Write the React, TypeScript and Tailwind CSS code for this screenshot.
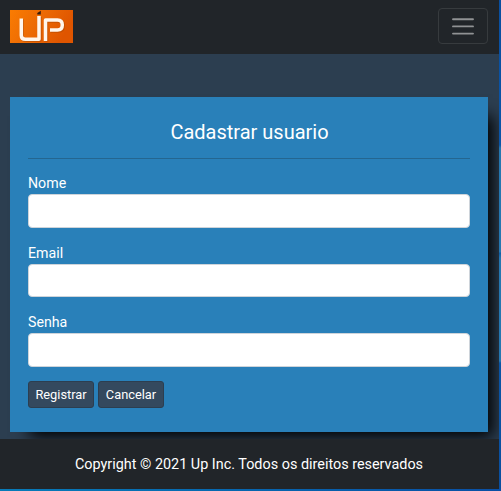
const fields = [
  { id: "nome", label: "Nome", type: "text", box: "mb-[14px] h-[34px]" },
  { id: "email", label: "Email", type: "email", box: "mb-[14px] h-[33px]" },
  { id: "senha", label: "Senha", type: "password", box: "mb-[14px] h-[34px]" },
];

function Logo() {
  return (
    <svg width="63" height="33" viewBox="0 0 63 33" aria-label="UP">
      <defs>
        <linearGradient id="orange" x1="0" y1="0" x2="1" y2="0.3">
          <stop offset="0" stopColor="#fa7c02" />
          <stop offset="0.5" stopColor="#ec6a04" />
          <stop offset="1" stopColor="#df5500" />
        </linearGradient>
      </defs>
      <rect width="63" height="33" fill="url(#orange)" />
      <g fill="none" strokeLinecap="butt" strokeLinejoin="round">
        <g stroke="#a94500" strokeOpacity="0.5" strokeWidth="4" transform="translate(0.7 0.8)">
          <path d="M11.3 8.5V25.5Q11.3 29.3 15.5 29.3H29V6" />
          <path d="M35.5 31V10H47.5Q52.3 10 52.3 15Q52.3 20 47.5 20H40" />
        </g>
        <g stroke="#fff6ec" strokeWidth="3.5">
          <path d="M11.3 8.5V25.5Q11.3 29.3 15.5 29.3H29V6" />
          <path d="M35.5 31V10H47.5Q52.3 10 52.3 15Q52.3 20 47.5 20H40" />
        </g>
      </g>
      <path d="M27.3 4.6V3L30.8 0.8V4.6Z" fill="#321c10" />
    </svg>
  );
}

export default function App() {
  return (
    <div className="flex h-[491px] w-[501px] flex-col overflow-hidden font-['Roboto',sans-serif] text-[14.4px] text-white">
      <div className="flex h-[489px]">
        <div className="flex w-[499px] shrink-0 flex-col overflow-hidden bg-[#2c3e50]">
          <header className="flex h-[54px] shrink-0 items-start justify-between bg-[#212529] pl-[10px] pr-[11px]">
            <div className="pt-[10px]">
              <Logo />
            </div>
            <button
              aria-label="Menu"
              className="mt-2 flex h-9 w-[50px] items-center justify-center rounded-[4px] border border-[#373b3e]"
            >
              <svg width="22" height="18" viewBox="0 0 22 18" stroke="#909294" strokeWidth="1.9" strokeLinecap="round">
                <path d="M1 2.2H21M1 9.4H21M1 16.6H21" />
              </svg>
            </button>
          </header>

          <main className="h-[385px] shrink-0 overflow-hidden pl-[10px] pr-[11px] pt-[43px]">
            <form className="h-[335px] bg-[#2980b9] px-[18px] pt-[23px] shadow-[12px_12px_15px_-7px_#000000]">
              <h1 className="mb-[13px] h-[39px] border-b border-[#246690] pl-px text-center text-[20px] leading-6">
                Cadastrar usuario
              </h1>
              {fields.map((f) => (
                <div key={f.id}>
                  <label htmlFor={f.id} className="block h-[22px] pt-px text-[14.2px] leading-[21px]">
                    {f.label}
                  </label>
                  <input
                    id={f.id}
                    type={f.type}
                    className={`block w-full rounded-[4px] border border-[#ced4da] bg-white px-3 text-[#212529] ${f.box}`}
                  />
                </div>
              ))}
              <div className="flex gap-1 text-[12.8px] leading-5">
                <button type="button" className="h-[27px] w-[66px] rounded-[3px] border border-[#2c3e50] bg-[#34495e]">
                  Registrar
                </button>
                <button type="button" className="h-[27px] w-[66px] rounded-[3px] border border-[#2c3e50] bg-[#34495e]">
                  Cancelar
                </button>
              </div>
            </form>
          </main>

          <footer className="flex h-[50px] shrink-0 items-center justify-center bg-[#212529] pt-[2px] pr-px">
            Copyright © 2021 Up Inc. Todos os direitos reservados
          </footer>
        </div>
        <div className="w-[2px] bg-[linear-gradient(#0a4f9f_0px,#0a55a8_145px,#2577b0_148px,#2577b0_252px,#0e5ca6_253px,#2577b0_258px,#2577b0_361px,#0a55a5_363px,#0a4f9f_489px)]" />
      </div>
      <div className="h-[2px] bg-gradient-to-r from-[#087bb8] to-[#0a4fa4]" />
    </div>
  );
}
